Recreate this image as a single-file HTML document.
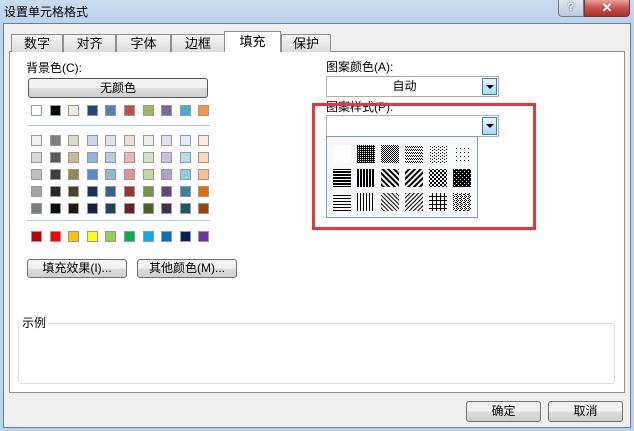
<!DOCTYPE html>
<html><head><meta charset="utf-8"><style>
*{margin:0;padding:0;box-sizing:border-box}
body{width:634px;height:431px;overflow:hidden;background:#bcd2ea;font-family:"Liberation Sans","Noto Sans CJK SC",sans-serif;font-size:12px;color:#000;position:relative}
.a{position:absolute}
.title{left:0;top:0;width:634px;height:24px;background:linear-gradient(#c9dcf0,#bcd3ec)}
.win{left:3px;top:23px;width:628px;height:405px;background:#f0f0f0;border:1px solid #6d7f92}
.tab{top:34px;height:18px;background:linear-gradient(#f5f5f5,#dcdcdc);border:1px solid #8e8f8f;border-bottom:none;text-align:center;font-size:13px;line-height:17px}
.panel{left:9px;top:51px;width:616px;height:342px;background:#fff;border:1px solid #8e8f8f}
.sw{width:11px;height:11px;border:1px solid #999}
.btn{border:1px solid #707070;border-radius:3px;background:linear-gradient(#f2f2f2 50%,#dddddd 50%,#cfcfcf);text-align:center;font-size:12px}
.cmb{border:1px solid #abadb3;background:#fff}
.arr{width:15px;height:17px;border:1px solid #3c7fb1;background:linear-gradient(#eaf6fd,#a7d9f5);}
.arr:after{content:"";position:absolute;left:3px;top:6px;border-left:4px solid transparent;border-right:4px solid transparent;border-top:4px solid #000}
.p{width:18px;height:18px}
</style></head><body>
<div class="a title"></div>
<div class="a" style="left:4px;top:3px;font-size:12px">设置单元格格式</div>
<div class="a" style="left:558px;top:0;width:26px;height:17px;border:1px solid #6e7e90;border-top:none;border-radius:0 0 0 4px;background:linear-gradient(#dfe8f2,#b9c9da);text-align:center;color:#fff;font-weight:bold;font-size:11px;line-height:15px;text-shadow:0 0 2px #333">?</div>
<div class="a" style="left:584px;top:0;width:46px;height:17px;border:1px solid #6e3a34;border-top:none;border-radius:0 0 4px 0;background:linear-gradient(#e8a397,#c75050 50%,#b52d20);text-align:center;color:#fff;font-weight:bold;font-size:13px;line-height:15px">✕</div>
<div class="a win"></div>
<div class="a panel"></div>
<div class="a tab" style="left:11px;width:52px">数字</div>
<div class="a tab" style="left:63px;width:53px">对齐</div>
<div class="a tab" style="left:116px;width:55px">字体</div>
<div class="a tab" style="left:171px;width:54px">边框</div>
<div class="a tab" style="left:224px;top:31px;height:21px;width:57px;background:#fff;line-height:20px">填充</div>
<div class="a tab" style="left:281px;width:50px">保护</div>

<div class="a" style="left:26px;top:59px;font-size:12px">背景色(C):</div>
<div class="a btn" style="left:28px;top:78px;width:180px;height:20px;line-height:18px;border-color:#555">无颜色</div>
<div id="pal"></div>
<div class="a" style="left:27px;top:125px;width:183px;height:1px;background:#a7cde6"></div>
<div class="a" style="left:27px;top:220px;width:183px;height:1px;background:#a7cde6"></div>
<div class="a btn" style="left:27px;top:259px;width:100px;height:19px;line-height:17px">填充效果(I)...</div>
<div class="a btn" style="left:137px;top:259px;width:100px;height:19px;line-height:17px">其他颜色(M)...</div>

<div class="a" style="left:326px;top:58px">图案颜色(A):</div>
<div class="a cmb" style="left:326px;top:76px;width:173px;height:21px"><div style="position:absolute;left:0;width:155px;text-align:center;line-height:19px">自动</div><div class="a arr" style="right:1px;top:1px"></div></div>
<div class="a" style="left:326px;top:98px">图案样式(P):</div>
<div class="a cmb" style="left:326px;top:115px;width:173px;height:22px"><div class="a arr" style="right:1px;top:1px;height:18px"></div></div>
<div class="a" style="left:326px;top:136px;width:152px;height:82px;border:1px solid #7f9db9;background:#f7f8fa"></div>
<svg class="a" style="left:0;top:0" width="634" height="431">
<defs>
<pattern id="d1" width="2" height="2" patternUnits="userSpaceOnUse"><rect width="1" height="1"/><rect x="1" y="1" width="1" height="1"/><rect x="1" width="1" height="1"/></pattern>
<pattern id="d2" width="2" height="2" patternUnits="userSpaceOnUse"><rect width="1" height="1"/><rect x="1" y="1" width="1" height="1"/></pattern>
<pattern id="d3" width="2" height="3" patternUnits="userSpaceOnUse"><rect width="1" height="1"/><rect x="1" y="2" width="1" height="1"/></pattern>
<pattern id="d4" width="4" height="3" patternUnits="userSpaceOnUse"><rect width="1" height="1"/><rect x="2" y="2" width="1" height="1"/></pattern>
<pattern id="d5" width="4" height="4" patternUnits="userSpaceOnUse"><rect width="1" height="1"/></pattern>
<pattern id="h1" width="4" height="3" patternUnits="userSpaceOnUse"><rect width="4" height="2"/></pattern>
<pattern id="v1" width="3" height="4" patternUnits="userSpaceOnUse"><rect width="2" height="4"/></pattern>
<pattern id="g1" width="4" height="4" patternUnits="userSpaceOnUse" patternTransform="rotate(45)"><rect width="4" height="2"/></pattern>
<pattern id="g2" width="4" height="4" patternUnits="userSpaceOnUse" patternTransform="rotate(-45)"><rect width="4" height="2"/></pattern>
<pattern id="ck" width="4" height="4" patternUnits="userSpaceOnUse"><rect width="2" height="2"/><rect x="2" y="2" width="2" height="2"/></pattern>
<pattern id="ck2" width="4" height="4" patternUnits="userSpaceOnUse"><rect width="4" height="4"/><rect x="2" y="1" width="1" height="1" fill="#fff"/><rect x="0" y="3" width="1" height="1" fill="#fff"/></pattern>
<pattern id="h2" width="4" height="3" patternUnits="userSpaceOnUse"><rect width="4" height="1"/></pattern>
<pattern id="v2" width="3" height="4" patternUnits="userSpaceOnUse"><rect width="1" height="4"/></pattern>
<pattern id="g3" width="3" height="3" patternUnits="userSpaceOnUse" patternTransform="rotate(45)"><rect width="3" height="1"/></pattern>
<pattern id="g4" width="3" height="3" patternUnits="userSpaceOnUse" patternTransform="rotate(-45)"><rect width="3" height="1"/></pattern>
<pattern id="gr" width="4" height="4" patternUnits="userSpaceOnUse"><rect width="4" height="1"/><rect width="1" height="4"/></pattern>
<pattern id="tr" width="4" height="4" patternUnits="userSpaceOnUse"><rect width="1" height="1"/><rect x="2" y="0" width="1" height="1"/><rect x="1" y="1" width="1" height="1"/><rect x="3" y="2" width="1" height="1"/><rect x="0" y="2" width="1" height="1"/><rect x="1" y="3" width="1" height="1"/></pattern>
</defs>
<g>
<rect x="333" y="145" width="18" height="18" fill="#fff"/>
<rect x="357" y="145" width="18" height="18" fill="url(#d1)"/>
<rect x="381" y="145" width="18" height="18" fill="url(#d2)"/>
<rect x="405" y="145" width="18" height="18" fill="url(#d3)"/>
<rect x="429" y="145" width="18" height="18" fill="url(#d4)"/>
<rect x="453" y="145" width="18" height="18" fill="url(#d5)"/>
<rect x="333" y="169" width="18" height="18" fill="url(#h1)"/>
<rect x="357" y="169" width="18" height="18" fill="url(#v1)"/>
<rect x="381" y="169" width="18" height="18" fill="url(#g1)"/>
<rect x="405" y="169" width="18" height="18" fill="url(#g2)"/>
<rect x="429" y="169" width="18" height="18" fill="url(#ck)"/>
<rect x="453" y="169" width="18" height="18" fill="url(#ck2)"/>
<rect x="333" y="193" width="18" height="18" fill="url(#h2)"/>
<rect x="357" y="193" width="18" height="18" fill="url(#v2)"/>
<rect x="381" y="193" width="18" height="18" fill="url(#g3)"/>
<rect x="405" y="193" width="18" height="18" fill="url(#g4)"/>
<rect x="429" y="193" width="18" height="18" fill="url(#gr)"/>
<rect x="453" y="193" width="18" height="18" fill="url(#tr)"/>
</g>
<rect x="313.5" y="104.5" width="221" height="124" fill="none" stroke="#e0383c" stroke-width="3"/>
</svg>

<div class="a" style="left:18px;top:323px;width:597px;height:61px;border:1px solid #d5dfe5;border-radius:3px"></div>
<div class="a" style="left:20px;top:314px;background:#fff;padding:0 2px">示例</div>
<div class="a btn" style="left:466px;top:401px;width:75px;height:21px;line-height:19px">确定</div>
<div class="a btn" style="left:548px;top:401px;width:75px;height:21px;line-height:19px">取消</div>
<script>
var rows=[
[105,["#fff","#000","#eeece1","#1f497d","#4f81bd","#c0504d","#9bbb59","#8064a2","#4bacc6","#f79646"]],
[135,["#f2f2f2","#7f7f7f","#ddd9c3","#c6d9f0","#dbe5f1","#f2dcdb","#ebf1dd","#e5e0ec","#dbeef3","#fdeada"]],
[152,["#d8d8d8","#595959","#c4bd97","#8db3e2","#b8cce4","#e5b9b7","#d7e3bc","#ccc1d9","#b7dde8","#fbd5b5"]],
[169,["#bfbfbf","#3f3f3f","#938953","#548dd4","#95b3d7","#d99694","#c3d69b","#b2a2c7","#92cddc","#fac08f"]],
[186,["#a5a5a5","#262626","#494429","#17365d","#366092","#953734","#76923c","#5f497a","#31859b","#e36c09"]],
[203,["#7f7f7f","#0c0c0c","#1d1b10","#0f243e","#244061","#632423","#4f6128","#3f3151","#205867","#974806"]],
[231,["#c00000","#ff0000","#ffc000","#ffff00","#92d050","#00b050","#00b0f0","#0070c0","#002060","#7030a0"]]];
var h="";rows.forEach(function(r){r[1].forEach(function(c,i){h+='<div class="a sw" style="left:'+(31+i*18.6)+'px;top:'+r[0]+'px;background:'+c+'"></div>';});});
document.getElementById("pal").innerHTML=h;
</script>
</body></html>
